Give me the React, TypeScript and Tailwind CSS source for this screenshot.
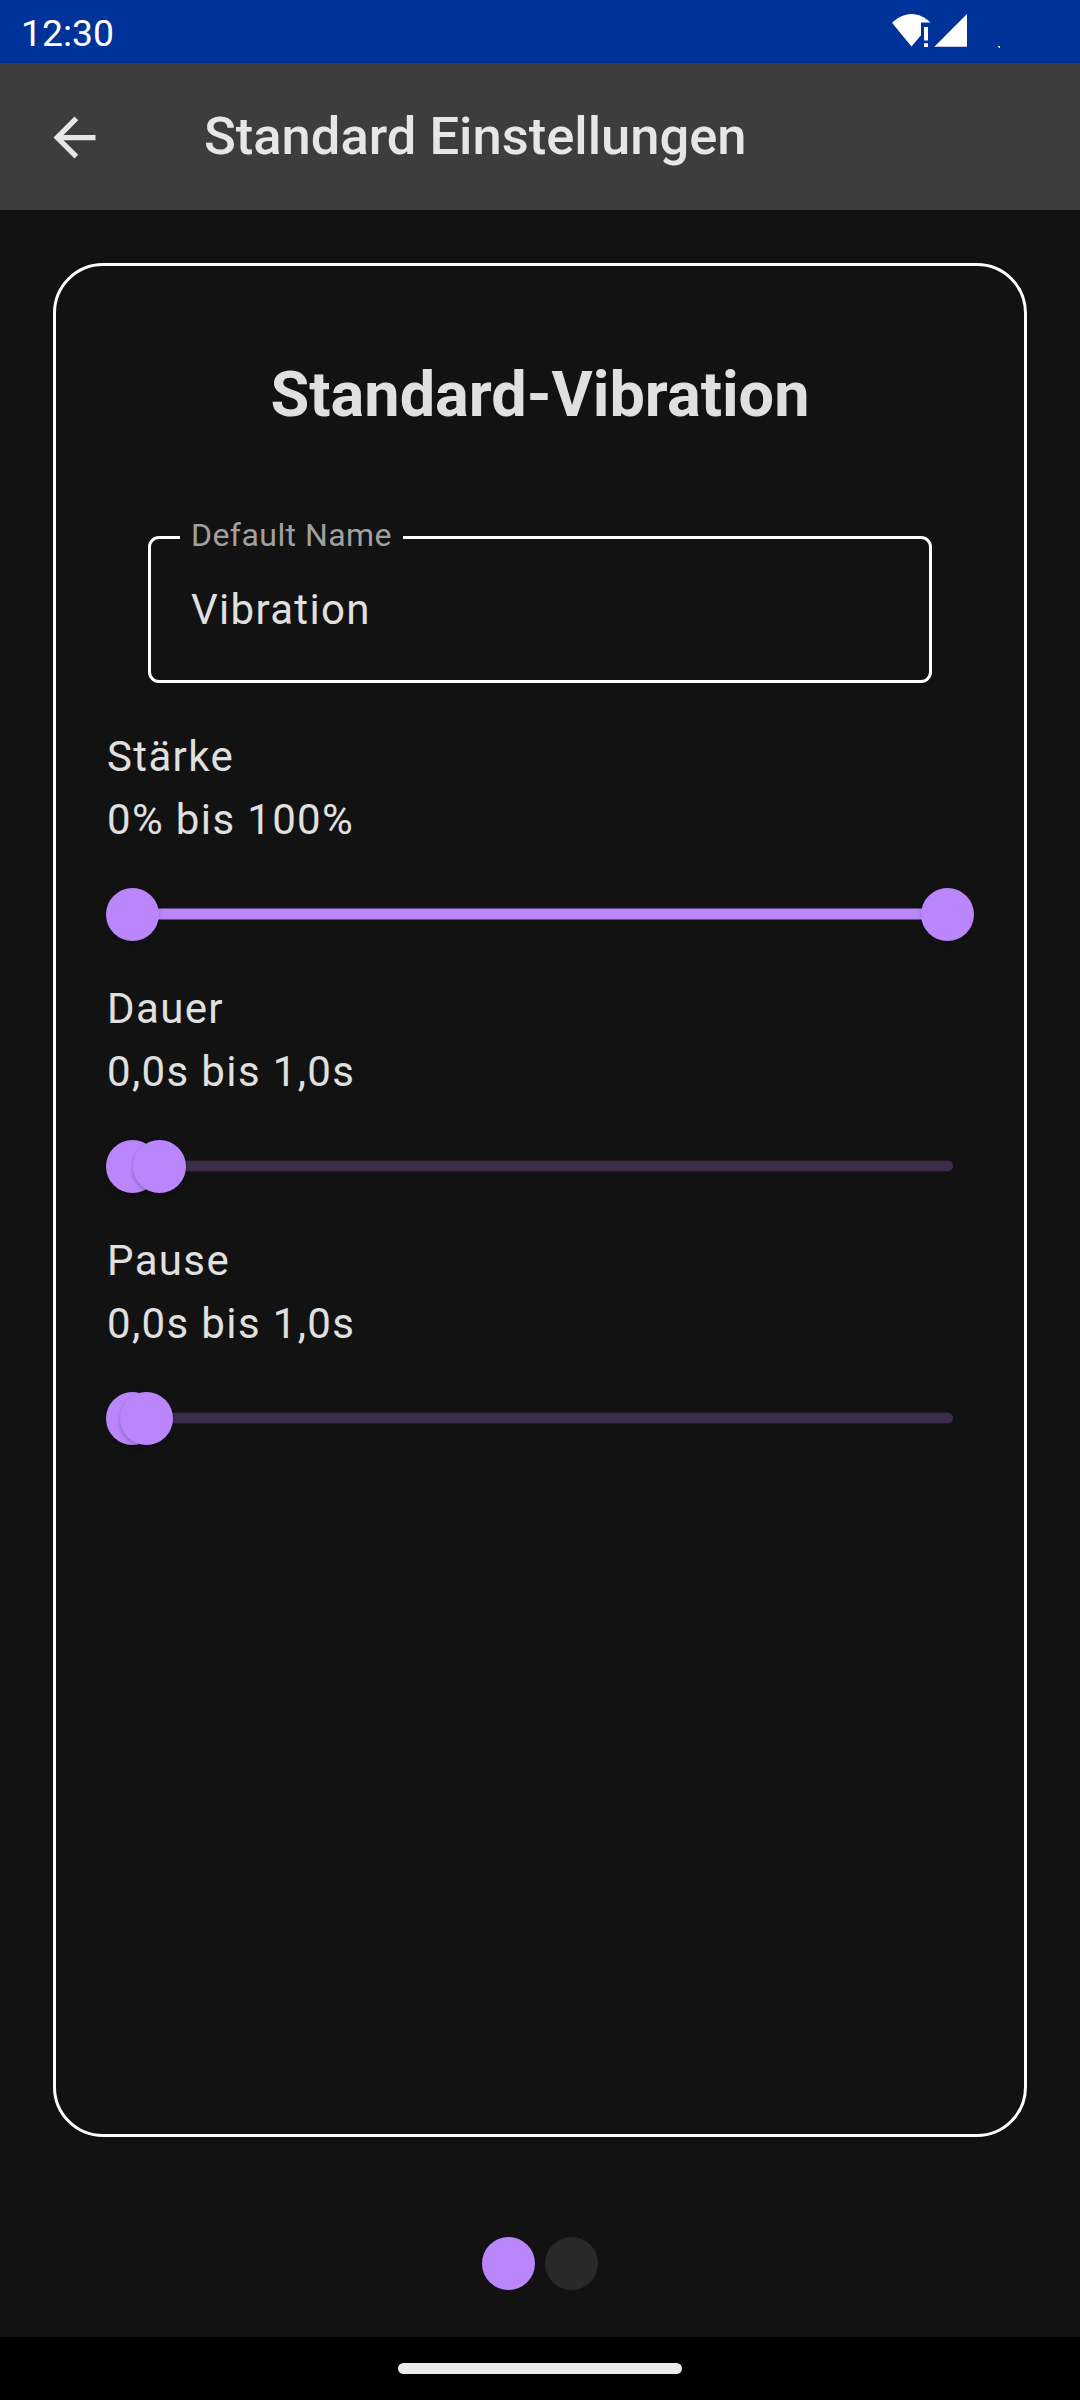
type RangeProps = {
  label: string;
  value: string;
  start: number;
  end: number;
};

const TRACK_LENGTH = 815.2;

function RangeSlider({ label, value, start, end }: RangeProps) {
  const from = start * TRACK_LENGTH;
  const to = end * TRACK_LENGTH;
  return (
    <section className="h-[252px] text-[42px] leading-[63px] tracking-[1.36px] text-[#e0e0e0]">
      <p className="pl-px">{label}</p>
      <p className="pl-px">{value}</p>
      <div className="relative h-[126px]">
        <div className="absolute left-[21px] top-[58px] h-[10px] w-[826px] rounded-full bg-[#3d2d4a] shadow-[0_1px_0_#1e1a21,0_-1px_0_#1e1a21]" />
        <div
          className="absolute top-[58px] h-[10px] bg-[#bb86fc] shadow-[0_1px_0_#5f4780,0_-1px_0_#5f4780]"
          style={{ left: 26.5 + from, width: to - from }}
        />
        <div
          className="absolute top-[37px] size-[53px] rounded-full bg-[#bb86fc] shadow-[0_2px_4px_rgba(0,0,0,0.25)]"
          style={{ left: from }}
        />
        <div
          className="absolute top-[37px] size-[53px] rounded-full bg-[#bb86fc] shadow-[0_2px_4px_rgba(0,0,0,0.25)]"
          style={{ left: to }}
        />
      </div>
    </section>
  );
}

function StatusBar() {
  return (
    <div className="flex h-[63px] justify-between bg-[#003399] text-white">
      <span className="pl-[21px] pt-[12px] text-[37.3px] leading-[43px]">12:30</span>
      <svg className="h-[63px] w-[220px]" viewBox="0 0 220 63" fill="currentColor">
        <path d="M32 22.8C37.5 17.5 44 14 51.5 14S65.200 17.500 70.500 22.500H61V35.300L51.500 46.500Z" />
        <path d="M64 27h4v13.500h-4zM64 43.300h4v3.600h-4z" />
        <path d="M107 14v32.800H74.300Z" />
        <path d="M138 46h2v2h-1v-1h-1z" />
      </svg>
    </div>
  );
}

export default function App() {
  return (
    <div className="flex h-[2400px] w-[1080px] flex-col overflow-hidden bg-[#121212] font-['Roboto',sans-serif]">
      <StatusBar />
      <header className="flex h-[147px] items-center bg-[#3d3d3d] text-[#e6e6e6]">
        <svg className="ml-[43px] mt-[2px] size-[63px] shrink-0" viewBox="0 0 24 24" fill="currentColor">
          <path d="M20 11H7.830l5.590-5.590L12 4l-8 8 8 8 1.410-1.410L7.830 13H20v-2z" />
        </svg>
        <h1 className="mb-[1px] ml-[98px] text-[52.5px] font-medium leading-[62px]">Standard Einstellungen</h1>
      </header>
      <main className="flex flex-1 flex-col px-[53px] pt-[53px]">
        <div className="h-[1874px] rounded-[50px] border-[3px] border-white px-[50px] pt-[90px]">
          <h2 className="text-center text-[63px] font-bold leading-[78px] text-[#e0e0e0]">Standard-Vibration</h2>
          <div className="relative mx-[42px] mt-[102px] h-[147px] rounded-[11px] border-[3px] border-white pl-[40px] pt-[39px]">
            <span className="absolute left-[29px] top-[-25px] w-[223px] whitespace-nowrap bg-[#121212] pl-[11px] text-[32px] leading-[42px] tracking-[0.45px] text-[#a0a0a0]">
              Default Name
            </span>
            <p className="text-[42px] leading-[63px] tracking-[1.3125px] text-[#e0e0e0]">Vibration</p>
          </div>
          <div className="mt-[42px]">
            <RangeSlider label="Stärke" value="0% bis 100%" start={0} end={1} />
            <RangeSlider label="Dauer" value="0,0s bis 1,0s" start={0} end={0.0333} />
            <RangeSlider label="Pause" value="0,0s bis 1,0s" start={0} end={0.0167} />
          </div>
        </div>
        <div className="mt-[100px] flex justify-center gap-[10px]">
          <div className="size-[53px] rounded-full bg-[#bb86fc]" />
          <div className="size-[53px] rounded-full bg-[#292929]" />
        </div>
      </main>
      <footer className="flex h-[63px] justify-center bg-black pt-[26px]">
        <div className="h-[11px] w-[284px] rounded-full bg-[#ebebeb]" />
      </footer>
    </div>
  );
}
